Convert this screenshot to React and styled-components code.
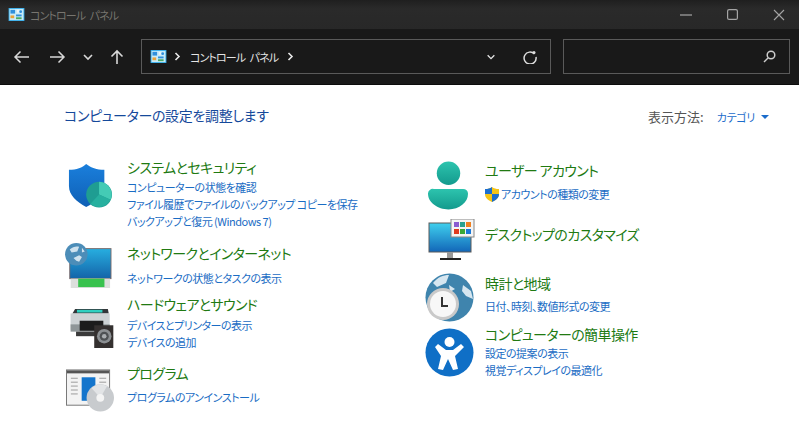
import React from 'react';
import styled, { createGlobalStyle } from 'styled-components';

const GlobalStyle = createGlobalStyle`
  html, body { margin: 0; padding: 0; background: #fff; }
  body {
    width: 799px;
    height: 433px;
    overflow: hidden;
    font-family: "Noto Sans CJK JP", "Noto Sans", sans-serif;
    font-feature-settings: "palt";
  }
`;

const Window = styled.div`
  display: flex;
  flex-direction: column;
  width: 799px;
  height: 433px;
`;

const TitleBar = styled.div`
  display: flex;
  align-items: center;
  height: 29px;
  padding: 0 0 0 8px;
  background: linear-gradient(#1f1f1f, #2a2a2a 30%, #282828);
  color: #77756f;
  font-size: 11px;
`;

const TitleText = styled.span`
  margin-left: 5px;
  flex: 1;
  letter-spacing: -0.9px;
  word-spacing: 3px;
`;

const WinButtons = styled.div`
  display: flex;
  align-items: center;
  gap: 35px;
  padding-right: 14px;
  color: #a5a5a5;
`;

const NavBar = styled.div`
  display: flex;
  align-items: center;
  height: 56px;
  padding: 0 9px 0 12px;
  background: #191919;
  border-bottom: 1px solid #0c0c0c;
  box-sizing: border-box;
  color: #d8d8d8;
`;

const NavButtons = styled.div`
  display: flex;
  align-items: center;
  width: 129px;
  gap: 15px;
`;

const AddressBox = styled.div`
  display: flex;
  align-items: center;
  width: 410px;
  height: 35px;
  box-sizing: border-box;
  padding: 0 11px 0 8px;
  border: 1px solid #5a5a5a;
  color: #e4e4e4;
  font-size: 11px;
`;

const Crumb = styled.span`
  margin: 0 9px 0 9px;
  letter-spacing: -0.9px;
  word-spacing: 3px;
`;

const Spacer = styled.div`
  flex: 1;
`;

const SearchBox = styled.div`
  display: flex;
  align-items: center;
  justify-content: flex-end;
  width: 227px;
  height: 35px;
  margin-left: 12px;
  padding-right: 13px;
  box-sizing: border-box;
  border: 1px solid #5a5a5a;
`;

const Content = styled.main`
  flex: 1;
  padding: 18px 30px 0 64px;
  background: #fff;
`;

const HeaderRow = styled.div`
  display: flex;
  align-items: center;
  justify-content: space-between;
  height: 24px;
`;

const Heading = styled.h1`
  margin: 0;
  color: #15499b;
  font-size: 14px;
  font-weight: 400;
  letter-spacing: -0.35px;
`;

const ViewBy = styled.div`
  display: flex;
  align-items: center;
  margin-top: 3px;
  color: #555;
  font-size: 13px;
`;

const ViewValue = styled.span`
  display: flex;
  align-items: center;
  gap: 6px;
  margin-left: 13px;
  color: #1b6ccb;
  font-size: 11px;
  letter-spacing: -0.3px;
`;

const Caret = styled.span`
  width: 0;
  height: 0;
  border-left: 4px solid transparent;
  border-right: 4px solid transparent;
  border-top: 4px solid #1b6ccb;
`;

const Columns = styled.div`
  display: grid;
  grid-template-columns: 361px 1fr;
`;

const Column = styled.div`
  display: flex;
  flex-direction: column;
  padding-top: ${({ $top }) => $top}px;
`;

const Category = styled.section`
  display: flex;
  align-items: flex-start;
  height: ${({ $h }) => $h}px;
`;

const IconSlot = styled.div`
  flex: none;
  width: ${({ $w = 63, $left = 0 }) => $w - $left}px;
  margin-left: ${({ $left = 0 }) => $left}px;
  margin-top: ${({ $top = 0 }) => $top}px;
  line-height: 0;
`;

const Texts = styled.div`
  display: flex;
  flex-direction: column;
`;

const Title = styled.a`
  color: #217a12;
  font-size: 14px;
  line-height: 22px;
  letter-spacing: -0.6px;
  margin-bottom: ${({ $gap }) => $gap || 0}px;
`;

const Link = styled.a`
  display: flex;
  align-items: center;
  color: #1a6cc4;
  font-size: 11px;
  line-height: 17px;
  letter-spacing: -0.5px;
`;

const Arrow = ({ flip }) => (
  <svg width="20" height="20" viewBox="0 0 20 20" fill="none" stroke="currentColor" strokeWidth="1.5">
    <path d={flip ? 'M3 10h14M11.500 4.500 17 10l-5.500 5.500' : 'M17 10H3M8.500 4.500 3 10l5.500 5.500'} />
  </svg>
);

const Chevron = ({ size = 12 }) => (
  <svg width={size} height={size} viewBox="0 0 12 12" fill="none" stroke="currentColor" strokeWidth="1.6">
    <path d="M2 4l4 4 4-4" />
  </svg>
);

const CrumbArrow = () => (
  <svg width="7" height="9" viewBox="0 0 7 9" fill="none" stroke="#e8e8e8" strokeWidth="1.6">
    <path d="M1.500 1l3.500 3.500L1.500 8" />
  </svg>
);

const PanelIcon = () => (
  <svg width="17" height="13" viewBox="0 0 17 14">
    <rect width="17" height="14" fill="#38aeea" />
    <rect x="1" y="1" width="15" height="12" fill="#c8ebf8" />
    <rect x="2" y="2" width="5" height="4" fill="#2f8fdc" />
    <rect x="9" y="2" width="2" height="3" fill="#f0f4f8" />
    <circle cx="13" cy="4" r="1.500" fill="#2f8fdc" />
    <rect x="2" y="8" width="4" height="3" fill="#e8a33a" />
    <rect x="8" y="7" width="6" height="2" fill="#2f8fdc" />
    <rect x="8" y="10" width="6" height="2" fill="#4aa860" />
  </svg>
);

const ShieldIcon = () => (
  <svg width="44" height="44" viewBox="0 0 46 46">
    <defs>
      <linearGradient id="sh" x1="0" y1="0" x2="0" y2="1">
        <stop offset="0" stopColor="#1a7fdc" />
        <stop offset="1" stopColor="#0f5fb5" />
      </linearGradient>
    </defs>
    <path d="M1 6c8 0 14-2 18-6 5 4 11 6 19 6v17c0 10-8 16-19 22C9 39 1 33 1 23z" fill="url(#sh)" />
    <circle cx="32.500" cy="32" r="13.500" fill="#1f9d92" />
    <path d="M32.500 32V18.500a13.500 13.500 0 0 1 12 19z" fill="#44cbb5" />
    <path d="M32.500 32l12 5.500a13.500 13.500 0 0 1-21 4z" fill="#27b09f" />
  </svg>
);

const NetworkIcon = () => (
  <svg width="47" height="45" viewBox="0 0 50 48">
    <defs>
      <linearGradient id="scr" x1="0" y1="0" x2="0" y2="1">
        <stop offset="0" stopColor="#27aee0" />
        <stop offset="1" stopColor="#1463a8" />
      </linearGradient>
    </defs>
    <rect x="5" y="6" width="44" height="32" fill="url(#scr)" stroke="#7a6a6a" />
    <rect x="6" y="38" width="42" height="10" fill="#dcdfdc" />
    <rect x="14" y="38" width="28" height="9" fill="#38c24e" />
    <circle cx="12" cy="12" r="12" fill="#4c8db8" />
    <path d="M5 7c3-3 7-4 10-3l-2 5-6 1zM9 16l6-3 3 2-3 5-3-1zM18 5l3 4-3 1z" fill="#cfe2ee" />
  </svg>
);

const PrinterIcon = () => (
  <svg width="47" height="40" viewBox="0 0 48 44">
    <path d="M3 6l3-5h36l1 5z" fill="#33373a" />
    <rect x="8" y="2" width="28" height="3" fill="#2fd0c0" />
    <rect x="1" y="6" width="43" height="18" fill="#cdd2d4" />
    <rect x="1" y="18" width="43" height="8" fill="#8f9698" />
    <rect x="11" y="14" width="26" height="11" fill="#1c1c1c" />
    <rect x="7" y="26" width="26" height="5" fill="#3a3a3a" />
    <rect x="27" y="19" width="21" height="25" fill="#34302f" />
    <circle cx="38" cy="31" r="8" fill="#8b8f92" />
    <circle cx="38" cy="31" r="5" fill="#4d5154" />
    <circle cx="38" cy="31" r="2.500" fill="#a9adb0" />
  </svg>
);

const ProgramIcon = () => (
  <svg width="48" height="43" viewBox="0 0 49 43">
    <rect x="0.500" y="0.500" width="44" height="36" fill="#f3f3f3" stroke="#777" />
    <rect x="1" y="1" width="43" height="3" fill="#555" />
    <rect x="16" y="8" width="14" height="24" fill="#1475cc" />
    <path d="M5 9h7M5 13h7M5 17h7M5 21h7M5 25h7M34 9h7M34 13h7M34 17h7" stroke="#9a9a9a" />
    <circle cx="35" cy="29" r="14" fill="#c8cbce" />
    <path d="M35 29l-9-10a14 14 0 0 1 16-2z" fill="#e2e4e6" />
    <circle cx="35" cy="29" r="4" fill="#f4f4f4" />
  </svg>
);

const UserIcon = () => (
  <svg width="41" height="50" viewBox="0 0 42 50">
    <defs>
      <linearGradient id="usr" x1="0" y1="0" x2="0" y2="1">
        <stop offset="0" stopColor="#2dc4ae" />
        <stop offset="1" stopColor="#139a8d" />
      </linearGradient>
    </defs>
    <circle cx="21" cy="12" r="12" fill="url(#usr)" />
    <path d="M6 28h30a5 5 0 0 1 5 5c0 9-9 16-20 16S0 42 0 33a5 5 0 0 1 6-5z" fill="url(#usr)" />
  </svg>
);

const DesktopIcon = () => (
  <svg width="47" height="42" viewBox="0 0 47 42">
    <defs>
      <linearGradient id="desk" x1="0" y1="0" x2="0" y2="1">
        <stop offset="0" stopColor="#3fd0ee" />
        <stop offset="1" stopColor="#1266b8" />
      </linearGradient>
    </defs>
    <rect x="1" y="4" width="42" height="29" fill="url(#desk)" stroke="#5a5a5a" />
    <rect x="19" y="33" width="6" height="6" fill="#999" />
    <rect x="12" y="39" width="21" height="2" fill="#222" />
    <rect x="23" y="0" width="23" height="18" fill="#f4f4f4" stroke="#888" />
    <rect x="26" y="3" width="5" height="5" fill="#8a5bd0" />
    <rect x="32" y="3" width="5" height="5" fill="#2aa090" />
    <rect x="38" y="3" width="5" height="5" fill="#f08020" />
    <rect x="26" y="10" width="5" height="5" fill="#e03a20" />
    <rect x="32" y="10" width="5" height="5" fill="#3aa838" />
    <rect x="38" y="10" width="5" height="5" fill="#1a78d8" />
  </svg>
);

const ClockIcon = () => (
  <svg width="49" height="49" viewBox="0 0 49 49">
    <circle cx="24.500" cy="24.500" r="24" fill="#3f84ad" />
    <path d="M8 10c5-6 10-8 16-8l-3 8-9 4zM38 12l8 6 2 8-7-3-4-5zM24 12l6 4-5 3z" fill="#d6e6f0" />
    <circle cx="18" cy="31" r="16" fill="#c9c9c9" />
    <circle cx="18" cy="31" r="13" fill="#f7f7f7" />
    <path d="M17 24v9h6" fill="none" stroke="#333" strokeWidth="2" />
  </svg>
);

const EaseIcon = () => (
  <svg width="49" height="49" viewBox="0 0 49 49">
    <circle cx="24.500" cy="24.500" r="24" fill="#0f6fc6" />
    <circle cx="24.500" cy="14" r="5" fill="#fff" />
    <path d="M10 19l3-3 8 6h7l8-6 3 3-9 9 3 13-5 1-5-11-5 11-5-1 3-13z" fill="#fff" />
  </svg>
);

const UacIcon = () => (
  <svg width="14" height="15" viewBox="0 0 14 15" style={{ marginRight: 2 }}>
    <path d="M7 0c2 1.500 4 2 7 2v5c0 4-3 6-7 8-4-2-7-4-7-8V2c3 0 5-.5 7-2z" fill="#f5c518" />
    <path d="M7 0v7H0V2c3 0 5-.5 7-2zM7 7h7c0 4-3 6-7 8z" fill="#1c6fd0" />
  </svg>
);

export default function App() {
  return (
    <Window>
      <GlobalStyle />
      <TitleBar>
        <PanelIcon />
        <TitleText>コントロール パネル</TitleText>
        <WinButtons>
          <svg width="12" height="12" viewBox="0 0 12 12" stroke="currentColor" strokeWidth="1.2"><path d="M0 6h12" /></svg>
          <svg width="11" height="11" viewBox="0 0 11 11" fill="none" stroke="currentColor" strokeWidth="1.2"><rect x="0.600" y="0.600" width="9.800" height="9.800" rx="1.500" /></svg>
          <svg width="12" height="12" viewBox="0 0 12 12" stroke="currentColor" strokeWidth="1.100"><path d="M1 1l10 10M11 1L1 11" /></svg>
        </WinButtons>
      </TitleBar>
      <NavBar>
        <NavButtons>
          <Arrow />
          <Arrow flip />
          <Chevron />
          <svg width="16" height="16" viewBox="0 0 16 16" fill="none" stroke="currentColor" strokeWidth="1.6">
            <path d="M8 15V2M2.500 7.500 8 2l5.500 5.500" />
          </svg>
        </NavButtons>
        <AddressBox>
          <PanelIcon />
          <span style={{ width: 7 }} />
          <CrumbArrow />
          <Crumb>コントロール パネル</Crumb>
          <CrumbArrow />
          <Spacer />
          <Chevron size={10} />
          <svg width="14" height="14" viewBox="0 0 14 14" fill="none" stroke="#ddd" strokeWidth="1.500" style={{ marginLeft: 27, marginRight: 2 }}>
            <path d="M11.500 4A6 6 0 1 0 13 7" />
            <circle cx="11" cy="2.500" r="1.500" fill="#ddd" stroke="none" />
          </svg>
        </AddressBox>
        <SearchBox>
          <svg width="13" height="13" viewBox="0 0 13 13" fill="none" stroke="#ccc" strokeWidth="1.500">
            <circle cx="8" cy="5" r="3.800" />
            <path d="M5 8l-4 4" />
          </svg>
        </SearchBox>
      </NavBar>
      <Content>
        <HeaderRow>
          <Heading>コンピューターの設定を調整します</Heading>
          <ViewBy>
            表示方法:
            <ViewValue>カテゴリ<Caret /></ViewValue>
          </ViewBy>
        </HeaderRow>
        <Columns>
          <Column $top={29}>
            <Category $h={86}>
              <IconSlot $top={8} $left={4}><ShieldIcon /></IconSlot>
              <Texts>
                <Title $gap={1}>システムとセキュリティ</Title>
                <Link>コンピューターの状態を確認</Link>
                <Link>ファイル履歴でファイルのバックアップ コピーを保存</Link>
                <Link>バックアップと復元 (Windows 7)</Link>
              </Texts>
            </Category>
            <Category $h={51}>
              <IconSlot $top={1} $left={1}><NetworkIcon /></IconSlot>
              <Texts>
                <Title $gap={6}>ネットワークとインターネット</Title>
                <Link>ネットワークの状態とタスクの表示</Link>
              </Texts>
            </Category>
            <Category $h={69}>
              <IconSlot $top={15} $left={4}><PrinterIcon /></IconSlot>
              <Texts>
                <Title $gap={2}>ハードウェアとサウンド</Title>
                <Link>デバイスとプリンターの表示</Link>
                <Link>デバイスの追加</Link>
              </Texts>
            </Category>
            <Category $h={50}>
              <IconSlot $top={7} $left={2}><ProgramIcon /></IconSlot>
              <Texts>
                <Title $gap={5}>プログラム</Title>
                <Link>プログラムのアンインストール</Link>
              </Texts>
            </Category>
          </Column>
          <Column $top={32}>
            <Category $h={64}>
              <IconSlot $w={60} $left={3} $top={2}><UserIcon /></IconSlot>
              <Texts>
                <Title $gap={5}>ユーザー アカウント</Title>
                <Link><UacIcon />アカウントの種類の変更</Link>
              </Texts>
            </Category>
            <Category $h={49}>
              <IconSlot $w={60} $left={3} $top={-4}><DesktopIcon /></IconSlot>
              <Texts>
                <Title>デスクトップのカスタマイズ</Title>
              </Texts>
            </Category>
            <Category $h={51}>
              <IconSlot $w={60} $top={1}><ClockIcon /></IconSlot>
              <Texts>
                <Title $gap={4}>時計と地域</Title>
                <Link>日付、時刻、数値形式の変更</Link>
              </Texts>
            </Category>
            <Category $h={60}>
              <IconSlot $w={60} $top={5}><EaseIcon /></IconSlot>
              <Texts>
                <Title>コンピューターの簡単操作</Title>
                <Link>設定の提案の表示</Link>
                <Link>視覚ディスプレイの最適化</Link>
              </Texts>
            </Category>
          </Column>
        </Columns>
      </Content>
    </Window>
  );
}
